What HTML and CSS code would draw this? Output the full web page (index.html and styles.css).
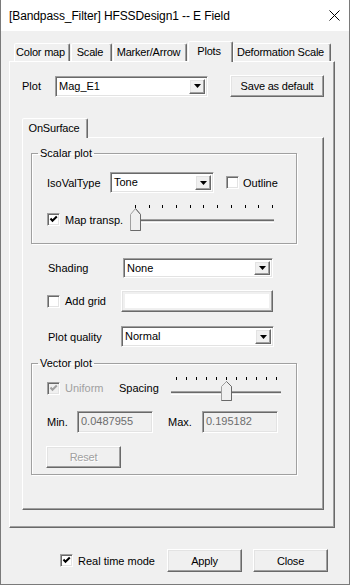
FILE: index.html
```html
<!DOCTYPE html>
<html lang="en">
<head>
  <meta charset="UTF-8" />
  <title>E Field</title>
  <link rel="stylesheet" href="styles.css">
</head>
<body>

  <div class="window">
    <div class="titlebar">
      <span class="title">[Bandpass_Filter] HFSSDesign1 -- E Field</span>
      <svg class="close-x" width="11" height="11" viewBox="0 0 11 11">
        <path d="M0.5 0.5 L10.5 10.5 M10.5 0.5 L0.5 10.5" stroke="#000" stroke-width="1" fill="none"/>
      </svg>
    </div>

    <div class="client">
      <div class="tabs">
        <div class="tab tab-colormap">Color map</div>
        <div class="tab tab-scale">Scale</div>
        <div class="tab tab-marker">Marker/Arrow</div>
        <div class="tab tab-plots active">Plots</div>
        <div class="tab tab-deform">Deformation Scale</div>
      </div>

      <div class="panel">
        <div class="plot-row">
          <span class="plot-label">Plot</span>
          <div class="combo sunken plot-combo">
            <span class="combo-text">Mag_E1</span>
            <span class="drop raised"><svg width="7" height="4"><polygon points="0,0 7,0 3.5,4" fill="#000"/></svg></span>
          </div>
          <button class="btn raised save-btn">Save as default</button>
        </div>

        <div class="tabs inner-tabs">
          <div class="tab active">OnSurface</div>
        </div>

        <div class="panel inner-panel">
          <fieldset class="group scalar">
            <legend>Scalar plot</legend>
            <div class="iso-row">
              <span class="iso-label">IsoValType</span>
              <div class="combo sunken iso-combo">
                <span class="combo-text">Tone</span>
                <span class="drop raised"><svg width="7" height="4"><polygon points="0,0 7,0 3.5,4" fill="#000"/></svg></span>
              </div>
              <span class="check outline-check">
                <span class="box sunken"></span>
                <span>Outline</span>
              </span>
            </div>
            <div class="transp-row">
              <span class="check transp-check">
                <span class="box sunken"><svg width="9" height="9"><polyline points="1.5,3.5 3.5,5.8 7.8,1.5" stroke="#000" stroke-width="2" fill="none"/></svg></span>
                <span>Map transp.</span>
              </span>
              <svg class="slider" width="148" height="32" viewBox="0 0 148 32">
                <g fill="#000">
                  <rect x="7" y="5" width="1" height="3"/><rect x="21" y="5" width="1" height="3"/>
                  <rect x="34" y="5" width="1" height="3"/><rect x="48" y="5" width="1" height="3"/>
                  <rect x="62" y="5" width="1" height="3"/><rect x="75" y="5" width="1" height="3"/>
                  <rect x="89" y="5" width="1" height="3"/><rect x="103" y="5" width="1" height="3"/>
                  <rect x="117" y="5" width="1" height="3"/><rect x="130" y="5" width="1" height="3"/>
                  <rect x="144" y="5" width="1" height="3"/>
                </g>
                <rect x="12" y="19" width="134" height="1" fill="#a0a0a0"/>
                <rect x="12" y="20" width="134" height="1" fill="#696969"/>
                <rect x="12" y="21" width="134" height="1" fill="#e3e3e3"/>
                <rect x="12" y="22" width="134" height="1" fill="#fff"/>
                <path d="M2.5 30.5 V14.5 L7.5 8.5 L12.5 14.5 V30.5 Z" fill="#f0f0f0" stroke="#a0a0a0"/>
                <path d="M7.5 8.5 L12.5 14.5 V30.5 H2.5" fill="none" stroke="#696969"/>
              </svg>
            </div>
          </fieldset>

          <div class="opt-row shade-row">
            <span class="opt-label">Shading</span>
            <div class="combo sunken opt-combo">
              <span class="combo-text">None</span>
              <span class="drop raised"><svg width="7" height="4"><polygon points="0,0 7,0 3.5,4" fill="#000"/></svg></span>
            </div>
          </div>

          <div class="opt-row grid-row">
            <span class="check opt-label">
              <span class="box sunken"></span>
              <span>Add grid</span>
            </span>
            <div class="color-btn raised"><span class="swatch"></span></div>
          </div>

          <div class="opt-row quality-row">
            <span class="opt-label">Plot quality</span>
            <div class="combo sunken opt-combo">
              <span class="combo-text">Normal</span>
              <span class="drop raised"><svg width="7" height="4"><polygon points="0,0 7,0 3.5,4" fill="#000"/></svg></span>
            </div>
          </div>

          <fieldset class="group vector">
            <legend>Vector plot</legend>
            <div class="spacing-row">
              <span class="check uniform-check disabled">
                <span class="box sunken"><svg width="9" height="9"><polyline points="1.5,3.5 3.5,5.8 7.8,1.5" stroke="#a0a0a0" stroke-width="2" fill="none"/></svg></span>
                <span>Uniform</span>
              </span>
              <span class="spacing-label">Spacing</span>
              <svg class="slider" width="113" height="28" viewBox="0 0 113 28">
                <g fill="#000">
                  <rect x="7" y="3" width="1" height="3"/><rect x="17" y="3" width="1" height="3"/>
                  <rect x="27" y="3" width="1" height="3"/><rect x="37" y="3" width="1" height="3"/>
                  <rect x="47" y="3" width="1" height="3"/><rect x="57" y="3" width="1" height="3"/>
                  <rect x="67" y="3" width="1" height="3"/><rect x="77" y="3" width="1" height="3"/>
                  <rect x="87" y="3" width="1" height="3"/><rect x="97" y="3" width="1" height="3"/>
                  <rect x="107" y="3" width="1" height="3"/>
                </g>
                <rect x="2" y="17" width="110" height="1" fill="#a0a0a0"/>
                <rect x="2" y="18" width="110" height="1" fill="#696969"/>
                <rect x="2" y="19" width="110" height="1" fill="#e3e3e3"/>
                <rect x="2" y="20" width="110" height="1" fill="#fff"/>
                <path d="M52.5 26.5 V12.5 L57.5 7.5 L62.5 12.5 V26.5 Z" fill="#f0f0f0" stroke="#a0a0a0"/>
                <path d="M57.5 7.5 L62.5 12.5 V26.5 H52.5" fill="none" stroke="#696969"/>
              </svg>
            </div>
            <div class="range-row">
              <span class="min-label">Min.</span>
              <span class="field sunken">0.0487955</span>
              <span class="max-label">Max.</span>
              <span class="field sunken">0.195182</span>
            </div>
            <div class="reset-row">
              <button class="btn raised reset-btn" disabled>Reset</button>
            </div>
          </fieldset>
        </div>
      </div>

      <div class="footer">
        <span class="check realtime-check">
          <span class="box sunken"><svg width="9" height="9"><polyline points="1.5,3.5 3.5,5.8 7.8,1.5" stroke="#000" stroke-width="2" fill="none"/></svg></span>
          <span>Real time mode</span>
        </span>
        <button class="btn raised foot-btn">Apply</button>
        <button class="btn raised foot-btn">Close</button>
      </div>
    </div>
  </div>

</body>
</html>
```

FILE: styles.css
```css
* {
  box-sizing: border-box;
  margin: 0;
  padding: 0;
}

body {
  width: 350px;
  height: 585px;
  overflow: hidden;
  background: #f0f0f0;
  font-family: "Liberation Sans", Arial, sans-serif;
  font-size: 11px;
  color: #000;
}

.window {
  height: 585px;
  border: 1px solid #7a7a7a;
  border-top: none;
  display: flex;
  flex-direction: column;
}

/* title bar */
.titlebar {
  height: 31px;
  background: #fff;
  display: flex;
  align-items: center;
  padding: 0 9px 0 8px;
}

.title {
  font-size: 12px;
  letter-spacing: -0.1px;
}

.close-x {
  margin-left: auto;
}

.client {
  padding: 10px 0 0 8px;
}

/* 3d edges */
.sunken {
  border: 1px solid;
  border-color: #a0a0a0 #fff #fff #a0a0a0;
  box-shadow: inset 1px 1px #696969, inset -1px -1px #e3e3e3;
}

.raised {
  border: 1px solid;
  border-color: #fff #696969 #696969 #fff;
  box-shadow: inset -1px -1px #a0a0a0, inset 1px 1px #e3e3e3;
  background: #f0f0f0;
}

/* tabs */
.tabs {
  display: flex;
  align-items: flex-end;
  height: 20px;
  padding-left: 5px;
}

.tab {
  height: 18px;
  padding: 0 3px 0 0;
  margin-right: 1px;
  border: 1px solid;
  border-bottom: none;
  border-color: #fff #696969 transparent #fff;
  box-shadow: inset -1px 0 #a0a0a0;
  border-radius: 2px 2px 0 0;
  line-height: 17px;
  letter-spacing: -0.2px;
  text-align: center;
  white-space: nowrap;
  background: #f0f0f0;
}

.tab.active {
  height: 21px;
  margin-bottom: -1px;
  position: relative;
  z-index: 1;
  line-height: 18px;
}

.tab-colormap { width: 56px; }
.tab-scale { width: 41px; }
.tab-marker { width: 74px; }
.tab-plots { width: 45px; margin-right: 0; }
.tab-deform { width: 98px; }

.panel {
  width: 326px;
  height: 467px;
  border: 1px solid;
  border-color: #fff #696969 #696969 #fff;
  box-shadow: inset -1px -1px #a0a0a0;
  padding: 0 10px 0 12px;
}

/* plot row */
.plot-row {
  display: flex;
  align-items: center;
  height: 22px;
  margin-top: 13px;
}

.plot-label {
  width: 33px;
}

.combo {
  display: flex;
  height: 21px;
  background: #fff;
  padding: 2px;
}

.combo-text {
  flex: 1;
  line-height: 15px;
  padding-left: 1px;
}

.drop {
  width: 16px;
  display: flex;
  align-items: center;
  justify-content: center;
}

.plot-combo {
  width: 153px;
}

.btn {
  font-family: "Liberation Sans", Arial, sans-serif;
  font-size: 11px;
  color: #000;
  letter-spacing: -0.2px;
}

.save-btn {
  width: 94px;
  height: 22px;
  margin-left: 22px;
}

/* inner tab page */
.inner-tabs {
  margin-top: 21px;
  height: 19px;
  padding-left: 0;
}

.inner-tabs .tab.active {
  height: 20px;
  width: 66px;
  padding: 0 2px 0 0;
}

.inner-panel {
  width: 302px;
  height: 373px;
  padding: 0 0 0 8px;
}

/* group boxes */
.group {
  width: 266px;
  border: 1px solid #a0a0a0;
  box-shadow: inset 1px 1px #fff, 1px 1px #fff;
  padding: 0;
}

.group legend {
  margin-left: 6px;
  padding: 0 2px;
  line-height: 13px;
}

.scalar {
  margin-top: 9px;
  padding: 12px 0 11px;
}

.iso-row {
  display: flex;
  align-items: center;
  height: 21px;
  padding-left: 15px;
}

.iso-label {
  width: 63px;
}

.iso-combo {
  width: 104px;
}

.check {
  display: flex;
  align-items: center;
}

.box {
  width: 13px;
  height: 13px;
  background: #fff;
  margin-right: 5px;
  display: flex;
  align-items: center;
  justify-content: center;
}

.outline-check {
  margin-left: 12px;
}

.outline-check .box {
  margin-right: 4px;
}

.transp-row {
  display: flex;
  align-items: flex-end;
  height: 32px;
  margin-top: 7px;
  padding-left: 15px;
}

.transp-check {
  width: 81px;
  margin-bottom: 6px;
}

/* option rows */
.opt-row {
  display: flex;
  align-items: center;
  padding-left: 17px;
}

.opt-label {
  width: 75px;
}

.opt-combo {
  width: 150px;
}

.shade-row {
  margin-top: 14px;
  height: 20px;
}

.shade-row .opt-combo {
  height: 20px;
}

.grid-row {
  margin-top: 12px;
  height: 22px;
}

.grid-row .opt-label {
  margin-left: -1px;
}

.color-btn {
  width: 152px;
  height: 22px;
  padding: 3px;
  margin-left: -1px;
}

.swatch {
  display: block;
  height: 100%;
  background: #fff;
}

.quality-row {
  margin-top: 14px;
  height: 21px;
}

.quality-row .opt-combo {
  margin-left: -2px;
  width: 153px;
}

/* vector group */
.vector {
  margin-top: 10px;
  padding: 4px 0 6px;
}

.spacing-row {
  display: flex;
  align-items: center;
  height: 28px;
  padding-left: 15px;
}

.uniform-check {
  width: 72px;
}

.disabled {
  color: #a0a0a0;
}

.disabled .box {
  background: #f0f0f0;
}

.spacing-label {
  width: 50px;
}

.range-row {
  display: flex;
  align-items: center;
  height: 22px;
  margin-top: 9px;
  padding-left: 15px;
}

.min-label {
  width: 30px;
}

.max-label {
  width: 34px;
  margin-left: 15px;
}

.field {
  width: 76px;
  height: 22px;
  padding: 2px 3px;
  line-height: 15px;
  color: #6d6d6d;
}

.reset-row {
  margin-top: 13px;
  padding-left: 14px;
}

.reset-btn {
  width: 75px;
  height: 22px;
  color: #a0a0a0;
  text-shadow: 1px 1px #fff;
}

/* footer */
.footer {
  display: flex;
  justify-content: flex-end;
  align-items: center;
  height: 23px;
  margin-top: 21px;
  padding-right: 21px;
}

.realtime-check {
  margin-right: 12px;
}

.foot-btn {
  width: 75px;
  height: 23px;
  margin-left: 11px;
}

.realtime-check + .foot-btn {
  margin-left: 0;
}
```
